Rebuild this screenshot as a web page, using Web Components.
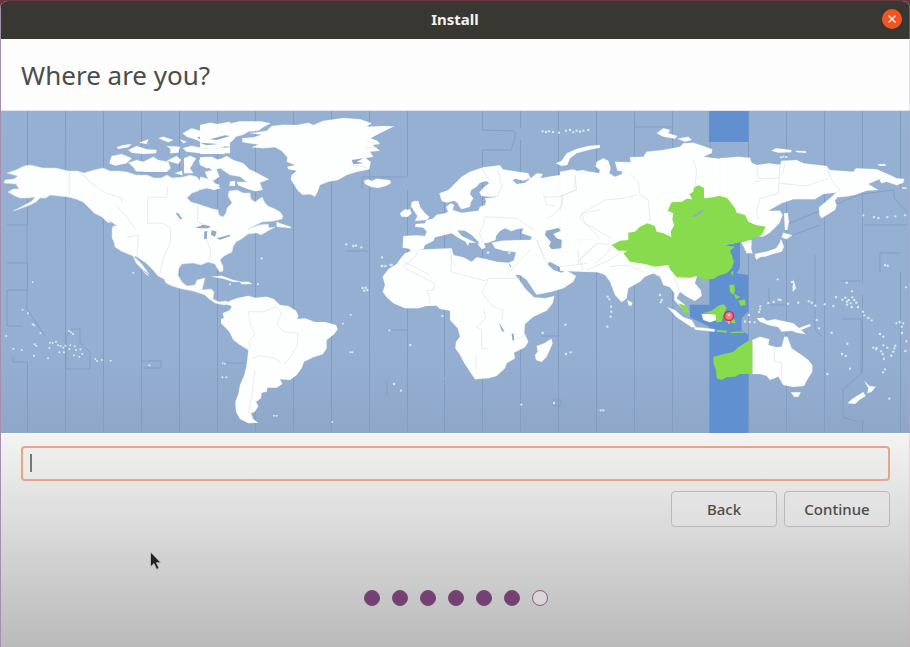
<!DOCTYPE html>
<html lang="en">
<head>
<meta charset="utf-8">
<title>Install</title>
<style>
html, body { margin: 0; min-height: 100%; }
body { font-family: "Noto Sans", "Open Sans", sans-serif; color: #4c4c4a; background: #bbb; }
</style>
</head>
<body>
<install-window>
  <title-bar slot="title">Install</title-bar>
  <page-heading slot="heading">Where are you?</page-heading>
  <time-zone-map slot="map"></time-zone-map>
  <location-field></location-field>
  <action-row>
    <push-button>Back</push-button>
    <push-button>Continue</push-button>
  </action-row>
  <step-dots total="7" done="6"></step-dots>
</install-window>
<mouse-pointer></mouse-pointer>
<script>
function define(name, html, after) {
  const template = document.createElement('template');
  template.innerHTML = html;
  customElements.define(name, class extends HTMLElement {
    constructor() {
      super();
      this.attachShadow({ mode: 'open' }).append(template.content.cloneNode(true));
    }
    connectedCallback() { if (after) after(this); }
  });
}

define('install-window', `<style>
:host { display: flex; flex-direction: column; min-height: 100vh; box-sizing: border-box; border-top: 1px solid #6d3444; background: #6d3444; }
main { position: relative; flex: 1; display: flex; flex-direction: column; background: #fdfdfd; border-radius: 8px 8px 0 0; overflow: hidden; }
main::after { content: ""; position: absolute; inset: 0; border-left: 1px solid #a58fac; border-right: 1px solid #c9a9bd55; pointer-events: none; }
section { flex: 1; display: flex; flex-direction: column; gap: 10px; padding: 12px 20px 41px 21px; background: linear-gradient(#f3f4f2, #e2e2e2 30%, #bababa); border-top: 1px solid #f5f9f8; }
</style><main><slot name="title"></slot><slot name="heading"></slot><slot name="map"></slot><section><slot></slot></section></main>`);

define('title-bar', `<style>
:host { display: grid; grid-template-columns: 1fr auto 1fr; align-items: center; box-sizing: border-box; height: 38px; padding: 0 8px 2px; background: #383732; color: #f3f2ee; font-size: 15px; line-height: 20px; font-weight: 700; }
h2 { grid-column: 2; margin: 0; font: inherit; }
button { justify-self: end; width: 20px; height: 20px; padding: 0; border: 0; border-radius: 50%; background: #f35322; display: grid; place-items: center; }
svg { display: block; }
</style><h2><slot></slot></h2><button aria-label="Close"><svg width="10" height="10" viewBox="0 0 10 10"><path d="M1.5 1.5l7 7m0-7l-7 7" stroke="#ffe3d5" stroke-width="1.6"/></svg></button>`);

define('page-heading', `<style>
:host { display: block; padding: 19px 21px 17px; background: #fdfdfd; border-bottom: 1px solid #e2e6ea; }
h1 { margin: 0; font-size: 26px; line-height: 35px; font-weight: 400; }
</style><h1><slot></slot></h1>`);

define('location-field', `<style>
:host { display: block; }
input { display: block; box-sizing: border-box; width: 100%; height: 35px; padding: 0 9px; font: 15px "Noto Sans", sans-serif; color: #4c4c4a; caret-color: transparent; border: 2px solid #e5a58d; border-radius: 4px; outline: 0;
  background: linear-gradient(#777, #777) 7px 6px / 2px 18px no-repeat, linear-gradient(#eeefed, #e9e9e8); }
</style><input type="text" aria-label="Location">`);

define('action-row', `<style>:host { display: flex; justify-content: flex-end; gap: 7px; }</style><slot></slot>`);

define('push-button', `<style>
:host { display: block; }
button { display: block; width: 106px; height: 36px; padding: 0; border: 1px solid #b9b9b9; border-radius: 4px; background: linear-gradient(#e4e4e4, #dfdfdf); font: 500 15px/20px "Noto Sans", sans-serif; color: #4c4c4a; }
</style><button><slot></slot></button>`);

define('step-dots', `<style>
:host { display: flex; justify-content: center; gap: 12px; margin-top: auto; }
i { box-sizing: border-box; width: 16px; height: 16px; border-radius: 50%; background: #763f74; border: 1px solid #6f4a70; }
i.todo { background: #d9d5d9; border: 1px solid #875f87; }
</style>`, host => {
  const total = +host.getAttribute('total'), done = +host.getAttribute('done');
  for (let i = 0; i < total; i++) {
    const dot = document.createElement('i');
    if (i >= done) dot.className = 'todo';
    host.shadowRoot.append(dot);
  }
});

define('mouse-pointer', `<style>
:host { position: absolute; left: 149px; top: 550px; pointer-events: none; }
svg { display: block; }
</style><svg width="14" height="24" viewBox="0 0 14 24"><path d="M1.5 2v15l3.4-3.4 2.8 5.8 2.4-1.2-2.7-5.4h4.6z" fill="#222" stroke="#c9c9c9" stroke-width=".8"/></svg>`);

/* Map shapes are grouped by region; each group has its own origin at three units per map pixel. */
const at = (x, y, body) => `<g transform="translate(${x} ${y}) scale(.33333)">${body}</g>`;
const land = (...p) => p.map(s => `<path d="M${s}z"/>`).join('');
const specks = (s, r = 6) => `<path class="speck" stroke-width="${r + 1}" d="${s.trim().split(/\s+/).map(p => 'M' + p + 'h.1').join('')}"/>`;
const borders = (...p) => p.map(s => `<path class="border" d="M${s}"/>`).join('');
const lakes = (...p) => p.map(s => `<path class="lake" d="M${s}z"/>`).join('');

let zones = '';
for (let k = 0; k < 24; k++) {
  const x = Math.round(27 + k * 37.95) + 0.5;
  const gaps = { 0: [[111,225],[263,290],[362,433]], 10: [[111,177],[190,433]], 11: [[190,378],[380,433]], 12: [[111,130],[150,433]], 13: [[111,128],[140,433]], 21: [[111,433]], 22: [[111,283],[295,373],[420,433]], 23: [[111,188],[272,433]] }[k] || [[111,433]];
  zones += gaps.map(g => `M${x} ${g[0]}V${g[1]}`).join('');
}
zones += 'M7 225H27V263H7M7 290H27V309L45 336M7 290V326H22M13 356V362H27M66 370V337L72 329H80V343L90 352V369H66M141 361H161V368H144M221 363H245M362 189V177H406M346 251H368M482 130L515 131V138L511 150H482M634 127H672M709 305H690V313M769 288V305H785M785 225L861 194L894 190M894 190V198L907 212M864 225H907M880 272V253H900M841 281H861M841 319H861V374L843 389V417L858 422M820 225L785 238M815 255V329L822 337M386 330H407M387 380V397M541 336H558M553 400h8v6h-8';

const na = '7 173L16 170 24 166 30 165 43 168 56 168 68 171 77 171 84 173 94 170 103 168 110 171 119 171 127 172 136 175 147 175 154 178 161 178 167 175 172 178 183 177 190 175 197 177 201 182 207 182 209 178 214 182 215 186 211 188 203 187 198 191 192 193 187 198 191 202 198 204 207 207 213 209 218 210 219 215 223 217 226 213 227 208 232 203 228 196 229 191 237 190 243 193 250 193 251 199 255 202 262 197 265 203 268 206 275 209 280 212 283 216 282 219 274 221 262 222 254 226 248 229 259 225 268 224 269 228 275 227 266 232 261 235 257 233 248 234 243 238 236 242 233 247 232 252 224 256 220 260 223 266 223 271 220 272 217 268 215 264 208 262 201 265 193 263 182 264 179 268 178 275 182 282 187 286 195 285 197 280 205 278 203 286 202 290 211 289 214 292 213 299 219 302 226 301 231 303 224 305 215 303 208 298 205 295 199 293 193 291 182 289 172 286 166 283 164 279 158 276 153 270 146 263 140 259 136 256 134 257 141 263 149 274 143 270 136 263 133 256 128 254 121 251 115 247 114 242 112 238 112 229 114 224 107 222 102 217 94 213 88 207 83 202 76 199 68 197 59 196 50 195 46 198 40 198 36 202 30 205 22 208 13 211 23 206 32 201 35 197 28 198 20 198 15 196 8 192 13 189 19 189 16 184 4 183 5 180 14 179 18 176';

const mapSvg = `<svg viewBox="0 111 910 322" role="img" aria-label="World time zone map">
<defs><linearGradient id="sea" x2="0" y2="1"><stop stop-color="#96b0d3"/><stop offset=".75" stop-color="#95afd2"/><stop offset="1" stop-color="#8ea7c9"/></linearGradient></defs>
<path d="M0 111H910V433H0z" fill="url(#sea)"/><path class="zones" d="${zones}"/>
<g class="band">${land('709 111H748.500V142H709')}${at(580, 240, land('388 580L388 260 330 232 330 195 388 195 388 110 430 100 435 0 480 0 480 85 470 100 505 105 505 215 485 235 485 270 505 285 505 580'))}</g>
<g class="land">${land(na)}
${at(0, 110, land(
  '328 160L335 138 365 132 395 145 380 160 345 167', '350 112L370 105 395 102 385 112 355 117', '418 98L445 88 440 102', '385 120L410 108 440 118 470 120 468 130 430 132 395 128',
  '385 158L410 150 430 155 460 140 475 150 505 155 512 175 500 186 460 190 430 186 408 184 400 172', '475 85L490 80 520 90 505 97', '500 108L540 110 535 128 510 130 512 118', '500 152L530 138 543 150 535 162',
  '548 70L575 55 600 62 635 45 690 35 690 110 620 105 590 90 560 80', '548 115L575 107 620 117 690 112 690 130 600 130 560 125', '552 145L570 137 588 145 580 160 570 175 580 190 552 190', '597 150L620 140 635 150 690 145 690 178 650 170 620 175 600 165', '615 185L650 178 658 200 640 212 625 210', '620 228L645 222 662 235 640 240', '524 190L545 182 548 196', '600 88L630 92 660 105 610 100', '540 88L560 95 550 100') + lakes('590 82L640 74 670 78 640 84 600 87', '630 60L655 55 633 70', '622 92L668 96 672 101 630 99', '640 152L652 148 650 165 640 168', '575 160L590 154 586 160'))}
${at(200, 110, land(
  '0 45L30 38 70 45 120 34 180 34 212 40 190 52 175 62 145 65 130 74 108 80 95 95 75 102 70 112 40 118 0 115', '0 122L70 120 75 132 0 132',
  '0 142L35 140 55 150 80 138 100 150 130 160 148 178 170 188 207 208 180 218 188 240 165 244 140 236 115 226 110 215 140 216 120 200 90 195 60 175 38 182 20 168 0 165', '0 200L20 205 30 215 60 225 45 240 20 235 0 240', '90 215L105 212 105 228 88 227',
  '127 85L160 82 185 74 150 70 200 62 215 48 250 44 290 45 325 38 340 45 370 32 430 24 480 28 515 40 500 50 545 48 582 49 555 62 530 75 512 85 532 92 540 102 518 105 540 122 510 125 520 140 497 145 512 155 508 178 470 186 440 195 415 210 385 215 360 225 353 245 345 260 330 253 308 255 292 240 283 225 272 208 275 195 290 182 265 178 262 170 285 165 260 155 262 142 245 123 225 112 190 115 155 112 175 104 127 97',
  '492 212L505 208 515 213 530 206 570 211 573 219 560 227 535 234 512 230 495 222', '230 335L240 340 272 350 273 355 230 350', '600 310L615 298 630 302 625 318 605 320', '636 283L643 272 655 280 665 305 683 325 645 333 652 318 640 300') + lakes('30 88L75 76 90 78 50 90', '0 98L55 102 20 106', '455 150L490 145 470 155 490 160 460 163') + borders('455 165L500 172M500 92L525 100M495 115L530 112'))}
${at(370, 110, land(
  '100 378L140 376 165 378 170 365 160 353 135 350 137 342 165 340 168 332 190 325 200 314 225 310 234 305 228 290 243 280 253 285 248 300 275 308 300 305 325 302 330 290 345 285 348 275 345 265 385 260 360 260 335 258 328 247 342 232 357 220 350 213 330 218 320 230 304 240 300 252 310 265 302 278 300 290 275 298 268 290 262 278 252 272 230 278 215 273 208 250 235 240 260 215 275 200 300 185 340 172 390 166 398 178 430 183 475 190 482 205 460 212 435 206 428 211 440 222 465 218 482 205 500 190 518 192 512 205 535 200 570 195 600 185 640 180 690 195 690 485 620 480 580 478 560 462 540 455 532 462 545 495 410 495 430 455 438 427 400 422 375 415 365 398 395 392 440 390 482 390 485 380 455 370 460 355 440 358 425 364 405 355 390 363 378 378 377 390 355 398 342 400 347 412 336 418 325 405 325 395 305 375 285 362 262 361 275 378 318 398 297 398 293 408 287 395 262 382 245 370 215 377 195 382 190 393 165 405 160 418 125 425 117 416 98 413',
  '125 276L145 272 150 290 165 310 178 320 172 330 140 332 145 315 134 302 123 290', '92 318L100 302 120 298 125 310 112 321', '558 160L575 152 590 130 620 117 655 108 690 105 690 113 655 120 620 130 600 145 592 165 575 168'))}
${at(560, 110, land(
  '0 185L40 178 65 190 95 185 117 190 120 180 107 170 110 155 130 145 145 152 152 175 148 190 165 200 186 192 186 184 172 182 165 155 212 157 210 142 250 140 260 125 310 120 360 110 370 100 400 98 430 108 457 118 455 130 430 140 480 146 570 145 570 370 530 398 490 405 480 480 400 495 60 485 0 482', '290 70L310 55 330 60 325 70 352 78 345 86 310 80', '352 86L385 80 395 90 375 95'))}
${at(720, 110, land(
  '0 145L55 140 90 143 95 158 110 165 145 160 180 164 185 152 230 150 250 160 320 168 330 180 400 185 408 175 470 178 515 197 530 205 553 207 550 218 530 226 500 215 484 220 478 208 445 222 475 240 440 242 405 255 375 260 352 262 345 272 350 285 345 300 305 325 298 315 297 292 330 265 348 248 310 252 285 268 220 268 185 280 145 302 180 302 188 315 178 340 150 368 128 380 112 378 112 350 0 350',
  '64 398L88 390 95 402 93 415 98 430 80 430 70 408', '192 310L203 308 207 335 202 360 195 360', '190 368L217 376 200 388 185 382', '182 388L192 410 185 425 160 432 135 440 118 440 110 449 104 438 145 428 170 425 178 408', '155 122L168 115 215 120 213 127 175 128', '225 122L258 124 258 129 232 127', '472 163L495 162 498 167 480 168', '545 232L560 233 560 236 548 236'))}
${at(0, 270, land(
  '660 98L680 103 690 92 710 85 745 77 765 83 800 80 820 86 840 105 865 108 888 122 895 137 892 147 915 145 945 156 975 156 1008 165 1013 178 1003 192 980 210 980 235 968 253 940 262 912 275 905 295 890 315 870 330 840 328 847 342 830 353 802 353 800 365 785 368 783 385 768 396 775 408 765 425 753 430 760 448 775 458 745 460 720 447 708 425 706 395 715 372 720 345 733 315 740 285 745 240 720 225 700 210 688 185 663 160 663 148 672 143 668 130 690 120 695 108', '635 20L665 17 700 30 725 35 700 36 670 26', '720 36L745 35 757 42 725 43', '425 0L448 17 440 15'))}
${at(360, 240, land(
  '135 40L155 32 200 28 275 25 280 45 310 52 335 65 350 52 380 58 410 65 445 68 455 92 478 120 495 145 522 172 555 175 583 168 578 190 560 212 520 230 495 252 493 280 505 305 495 322 462 338 465 355 440 370 435 385 410 408 385 415 345 418 330 395 313 370 300 345 286 325 288 305 300 290 293 265 270 240 270 212 240 207 230 197 200 198 175 205 135 205 100 190 80 172 68 155 75 135 68 110 85 88 110 72 122 55',
  '445 68L465 60 480 0 700 0 690 96 650 92 612 88 570 65 560 70 580 90 605 98 618 90 648 108 640 125 610 145 575 155 530 164 520 150 500 120 480 105', '574 296L578 310 560 350 545 366 528 360 525 345 533 335 530 318 553 310'))}
${at(580, 240, land(
  '0 0L350 0 350 112 345 130 362 150 365 168 345 183 320 170 300 155 290 175 315 195 328 220 305 205 283 180 283 160 270 142 250 135 240 110 220 100 195 110 180 125 145 145 140 175 125 187 105 165 90 125 75 105 50 95 0 92', '142 180L157 188 155 197 146 196', '262 202L285 210 310 232 335 240 348 262 335 262 310 245 290 232', '342 262L370 263 405 268 403 275 345 269',
  '365 222L408 222 410 240 390 247 370 240', '530 235L550 233 560 242 585 238 640 250 658 265 677 283 650 278 635 272 605 275 595 262 565 255 540 245', '517 300L540 290 568 298 565 315 590 322 605 320 613 290 622 290 635 325 650 335 665 345 685 360 697 375 697 395 680 422 672 438 640 441 610 435 595 410 570 420 560 408 540 402 517 402', '633 457L662 457 655 471 642 470', '853 422L868 438 887 440 875 455 862 460 865 445', '850 456L857 468 838 480 825 492 803 490 815 478', '655 265L690 252 692 258 665 269', '640 118L648 145 638 155', '484 0L515 0 512 35 498 32', '605 0L610 20 585 38 552 45 530 58 524 42 565 33 588 25'))}
</g>
<g class="green">${at(560, 110, land('155 405L180 392 205 390 205 368 225 365 240 350 262 340 285 348 290 365 310 370 334 381 332 365 343 345 337 330 340 310 323 302 335 277 365 275 380 266 397 268 388 252 400 245 402 232 417 226 432 235 432 265 460 262 478 257 502 265 525 295 530 308 555 315 565 335 587 345 617 350 605 375 555 395 530 398 490 405 525 410 510 422 515 435 522 455 515 475 500 490 475 497 460 507 430 508 410 498 390 503 350 502 330 478 325 465 285 470 255 462 210 455 190 430 203 422 175 422'))}
${at(580, 240, land('517 305L505 303 490 312 475 322 460 335 430 343 400 350 400 370 408 390 410 415 425 420 440 412 465 410 480 402 517 401', '295 190L318 197 328 220 312 218', '370 218L395 212 415 197 430 193 440 203 430 225 425 245 410 247 406 224', '448 135L462 133 465 150 460 165 450 155', '475 182L495 178 497 195 482 197', '462 162L480 170 468 178', '438 245L440 215 460 215 450 222 460 232 468 250 455 248 448 235 447 248', '362 122L378 122 370 132', '452 97L460 93 459 108', '410 270L440 272 440 278 410 275', '450 276L495 274 492 278 455 280'))}</g>
${at(370, 110, lakes('528 362L565 354 573 362 550 372 560 385 575 390 574 415 545 418 537 408 543 396 525 375') + borders('335 175L345 190 360 215M385 180L395 230 382 260M340 345L345 320 400 323 440 325 470 345 490 360M340 400L328 370 340 345M520 250L530 285 555 287M575 255L577 285 550 315 530 325M615 200L615 240 570 260 520 262M690 300L635 310 630 325 650 345 690 385M500 390L515 430 530 460M100 455L180 495M240 420L245 455 260 470M410 495L480 420'))}
${at(0, 110, borders('208 185L208 255M240 188L275 220 320 250 365 265 365 278M345 280L360 300 380 320 408 360M380 382L415 375 410 455M443 262L500 262 503 230M443 262L443 340 490 340 512 355 510 400 490 445 480 490M595 285L592 335 615 345M620 390L632 420 630 450') + lakes('527 308L535 310 547 327 540 327', '585 353L610 344 632 349 625 355 600 355', '613 365L622 362 620 388 612 387', '635 360L650 365 645 380 633 375', '650 385L690 374 690 379 660 389', '410 185L500 187 500 190 440 193', '250 280L278 305 265 300', '325 330L350 348 340 347'))}
${at(0, 270, borders('745 125L750 160 765 190 748 215 750 235M745 125L790 125 830 110 845 130 830 160 850 185 895 190 890 230 865 270 850 285M755 265L780 257 825 265 845 282M765 300L755 380 745 430'))}
${at(360, 240, borders('130 82L225 130 222 150 200 152 210 175 208 190M130 82L165 50 175 35M275 45L272 95 375 122 385 115 480 115M385 115L365 160 400 200 430 210 425 240M370 205L378 235 350 260 365 270 365 325 385 325M348 345L348 385M460 300L500 285M530 0L550 45M655 30L655 75') + lakes('417 250L424 258 434 277 425 272', '455 280L461 282 462 303 457 300'))}
${at(560, 110, borders('45 195L50 240 10 255 0 300M210 190L235 215 240 255 265 270 270 335M65 310L135 270 190 265 230 255M65 310L75 340 155 385M155 405L115 400 75 430 60 450 70 480M155 410L130 440 105 460M400 150L410 180 405 235M0 470L80 460') + lakes('390 320L410 312 431 295 428 305 410 319'))}
${at(720, 110, borders('110 168L115 205 175 205 190 185 195 155M180 165L175 250 120 265 110 300 115 330M180 220L260 228 325 205M320 170L335 210 360 240 340 255M105 215L125 212'))}
${at(580, 240, borders('583 320L583 365 605 368 605 430M0 60L50 10M20 90L90 60 130 30M200 80L235 110M285 115L300 160M90 80L140 75 190 95'))}
${at(0, 270, specks('98,36 68,119 84,130 98,163 102,166 121,190 19,198 40,236 65,240 104,223 109,227 102,257 144,265 148,234 150,218 158,219 168,215 174,226 182,228 190,233 196,227 178,247 192,247 211,226 208,237 224,229 228,240 241,238 222,256 238,260 247,252 207,183 213,187 219,192 286,267 291,273 305,270 332,272 448,286 668,280 675,281 667,322 679,322 822,437 830,437 1052,134 1029,161 1051,247 1057,247 997,456 690,43 774,43 400,8', 5))}
${at(200, 110, specks('185,445 439,403 460,408 468,407 484,412 545,468 556,468 546,442 575,465', 6))}
${at(360, 240, specks('88,271 151,315 247,228 102,432 123,452 548,279 616,254 618,342 632,337 484,494 582,489 8,144 17,143 22,150 13,152 67,78 92,75 383,38 448,39', 6))}
${at(370, 110, specks('518,64 528,66 537,64 549,66 567,68 588,62 600,60 610,67 620,62 630,65 640,62 655,60 355,427 418,425', 6))}
${at(720, 110, specks('430,316 462,321 475,324 502,321 526,319 555,316 495,466 503,467 190,140 183,142 199,141', 6))}
${at(580, 240, specks('593,118 800,128 816,154 636,126 640,140 768,171 787,179 796,173 801,185 806,180 817,172 823,180 829,188 812,190 815,201 834,201 801,194 760,198 734,193 706,197 686,184 695,188 655,188 624,191 602,180 596,179 581,186 565,189 541,199 540,208 537,216 849,215 853,226 865,234 875,241 949,250 959,246 970,250 965,260 900,282 910,290 966,279 890,324 910,316 903,334 922,323 943,325 940,335 934,347 912,357 908,342 946,317 979,304 976,333 915,388 909,397 786,342 797,348 802,311 810,386 742,402 928,476 978,142 915,75 62,511 70,511 83,170 88,178 93,200 94,215 92,230 82,260 240,165 245,180 242,187 495,245 509,246 524,247 507,225 880,323 888,328 755,278 717,265 710,240', 6))}
<circle cx="729" cy="316" r="4.500" fill="#f08087" stroke="#d62f3d" stroke-width="1.600"/><circle cx="729" cy="315" r="1.200" fill="#ffc1c0"/><path d="M729 321v3" stroke="#dfe9d0"/>
</svg>`;

define('time-zone-map', `<style>
:host { display: block; }
svg { display: block; width: 100%; height: auto; }
.zones { fill: none; stroke: #839dc2; stroke-width: 1; }
.land { fill: #fdfefe; stroke: #dce6f2; stroke-width: .5; stroke-linejoin: round; }
.green { fill: #88db4c; }
.band { fill: #6190d1; }
.border { fill: none; stroke: #dfe2e5; stroke-width: 2; }
.lake { fill: #8fa9ca; stroke: none; }
.speck { fill: none; stroke: #d6e9f4; stroke-linecap: round; }
</style>${mapSvg}`);
</script>
</body>
</html>
